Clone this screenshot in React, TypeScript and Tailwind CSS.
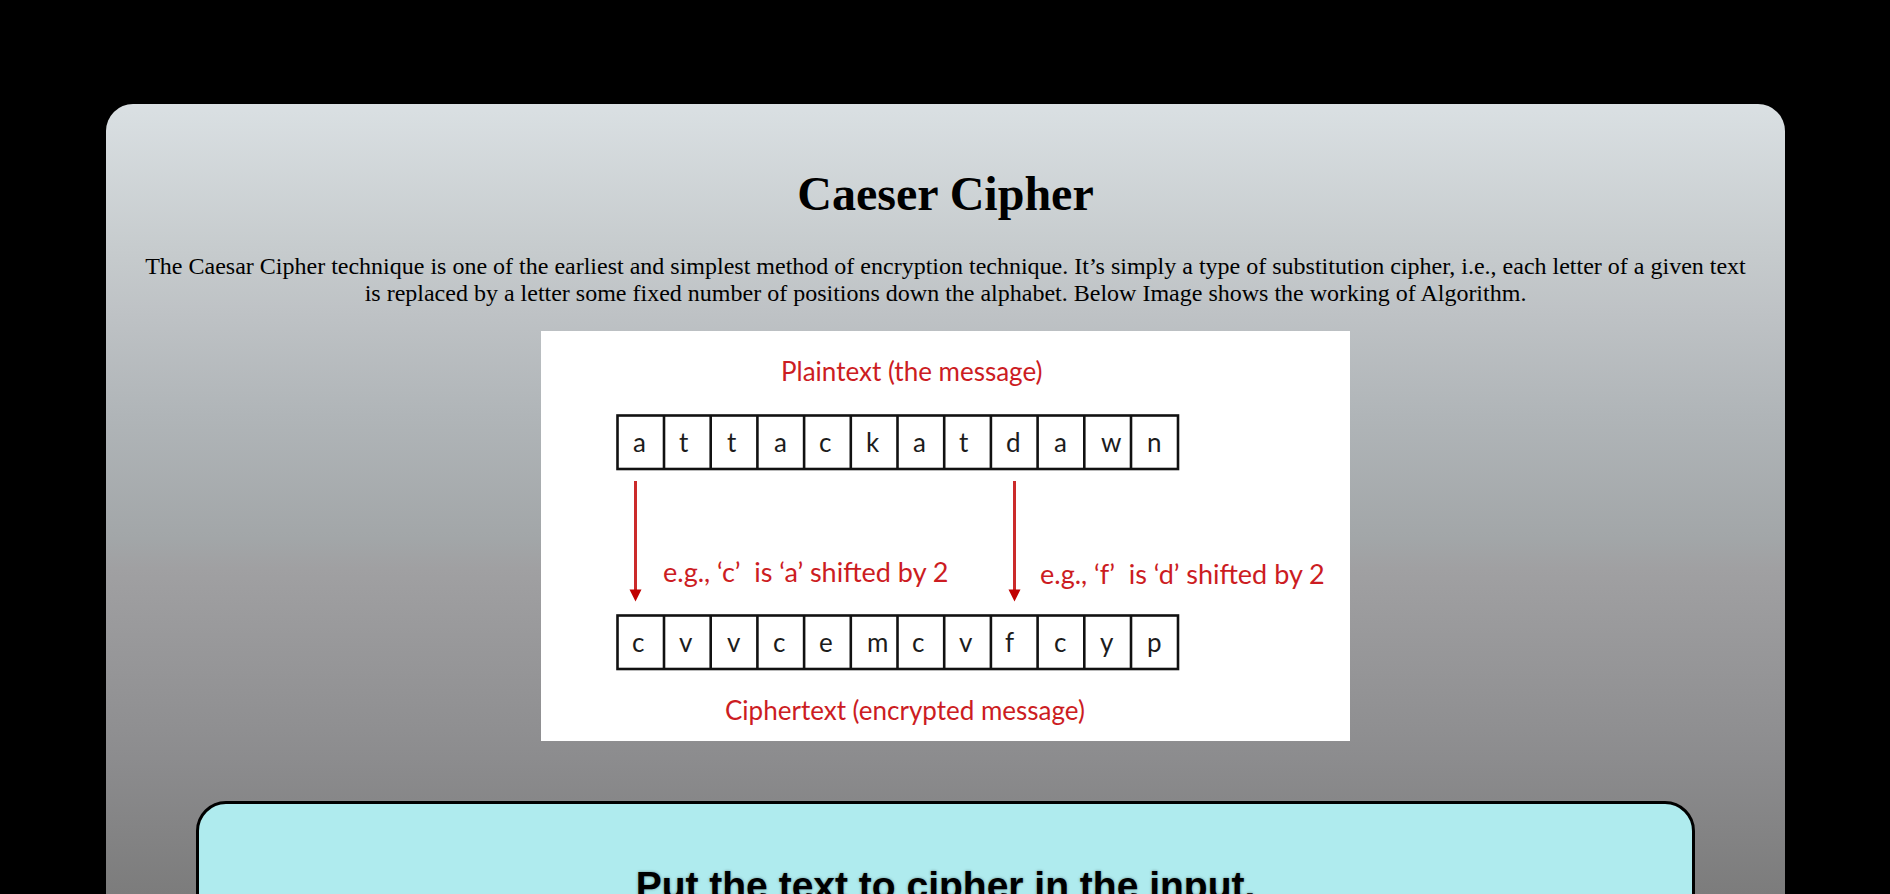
const plain = [
  ["a", 92], ["t", 138], ["t", 186], ["a", 233], ["c", 278], ["k", 325],
  ["a", 372], ["t", 418], ["d", 465], ["a", 513], ["w", 560], ["n", 606],
] as const;

const cipher = [
  ["c", 91], ["v", 138], ["v", 186], ["c", 232], ["e", 278], ["m", 326],
  ["c", 371], ["v", 418], ["f", 464], ["c", 513], ["y", 559], ["p", 606],
] as const;

function Cells({ top, letters }: { top: number; letters: readonly (readonly [string, number])[] }) {
  return (
    <g>
      <rect x={76.5} y={top} width={560.5} height={53.5} fill="none" stroke="#111" strokeWidth={2.6} />
      {letters.slice(1).map((_, i) => (
        <line key={i} x1={76.3 + 46.7 * (i + 1)} x2={76.3 + 46.7 * (i + 1)} y1={top} y2={top + 53.5} stroke="#111" strokeWidth={2.6} />
      ))}
      {letters.map(([c, x], i) => (
        <text key={i} x={x} y={top + 36} fill="#1c1c1c">{c}</text>
      ))}
    </g>
  );
}

function Arrow({ x }: { x: number }) {
  return (
    <g>
      <line x1={x} x2={x} y1={150} y2={260} stroke="#cb2a2a" strokeWidth={3} />
      <path d={`M${x - 6} 258.5h12l-6 12z`} fill="#c00000" />
    </g>
  );
}

function Diagram() {
  return (
    <svg viewBox="0 0 809 410" role="img" aria-label="Caesar cipher with a shift of 2" className="mx-auto w-[809px] max-w-full bg-white font-[Lato,sans-serif] text-[26px]">
      <g fill="#cc1c22">
        <text x={240} y={50}>Plaintext (the message)</text>
        <text x={122} y={251} className="text-[27px] whitespace-pre">e.g., ‘c’  is ‘a’ shifted by 2</text>
        <text x={499} y={253} className="text-[27px] whitespace-pre">e.g., ‘f’  is ‘d’ shifted by 2</text>
        <text x={184} y={389}>Ciphertext (encrypted message)</text>
      </g>
      <Cells top={84.5} letters={plain} />
      <Cells top={284.5} letters={cipher} />
      <Arrow x={94.5} />
      <Arrow x={473.5} />
    </svg>
  );
}

export default function App() {
  return (
    <div className="h-screen overflow-hidden bg-black pt-[104px] pr-[105px] pl-[106px] font-['Liberation_Serif',serif] text-black">
      <main className="min-h-[1000px] rounded-t-[27px] bg-linear-[180deg,#dae0e3_0px,#c6cbcd_148px,#bec2c5_210px,#b0b5b8_310px,#a2a6a8_435px,#a0a0a2_465px,#8c8c8e_654px,#7c7c7c_790px] px-[36px] pt-[63px] text-center">
        <h1 className="text-[48px] leading-[54px] font-bold">Caeser Cipher</h1>
        <p className="mt-[32px] text-[24px] leading-[27px]">
          The Caesar Cipher technique is one of the earliest and simplest method of encryption technique. It’s simply a type of substitution cipher, i.e., each letter of a given text is replaced by a letter some fixed number of positions down the alphabet. Below Image shows the working of Algorithm.
        </p>
        <div className="mt-[24px]">
          <Diagram />
        </div>
        <section className="mx-[54px] mt-[60px] min-h-[400px] rounded-[30px] border-[3px] border-black bg-[#afebee] pt-[59px]">
          <h2 className="font-['Liberation_Sans',sans-serif] text-[39px] leading-[45px] font-bold text-shadow-[0px_0px_3px_#00000066]">
            Put the text to cipher in the input.
          </h2>
        </section>
      </main>
    </div>
  );
}
